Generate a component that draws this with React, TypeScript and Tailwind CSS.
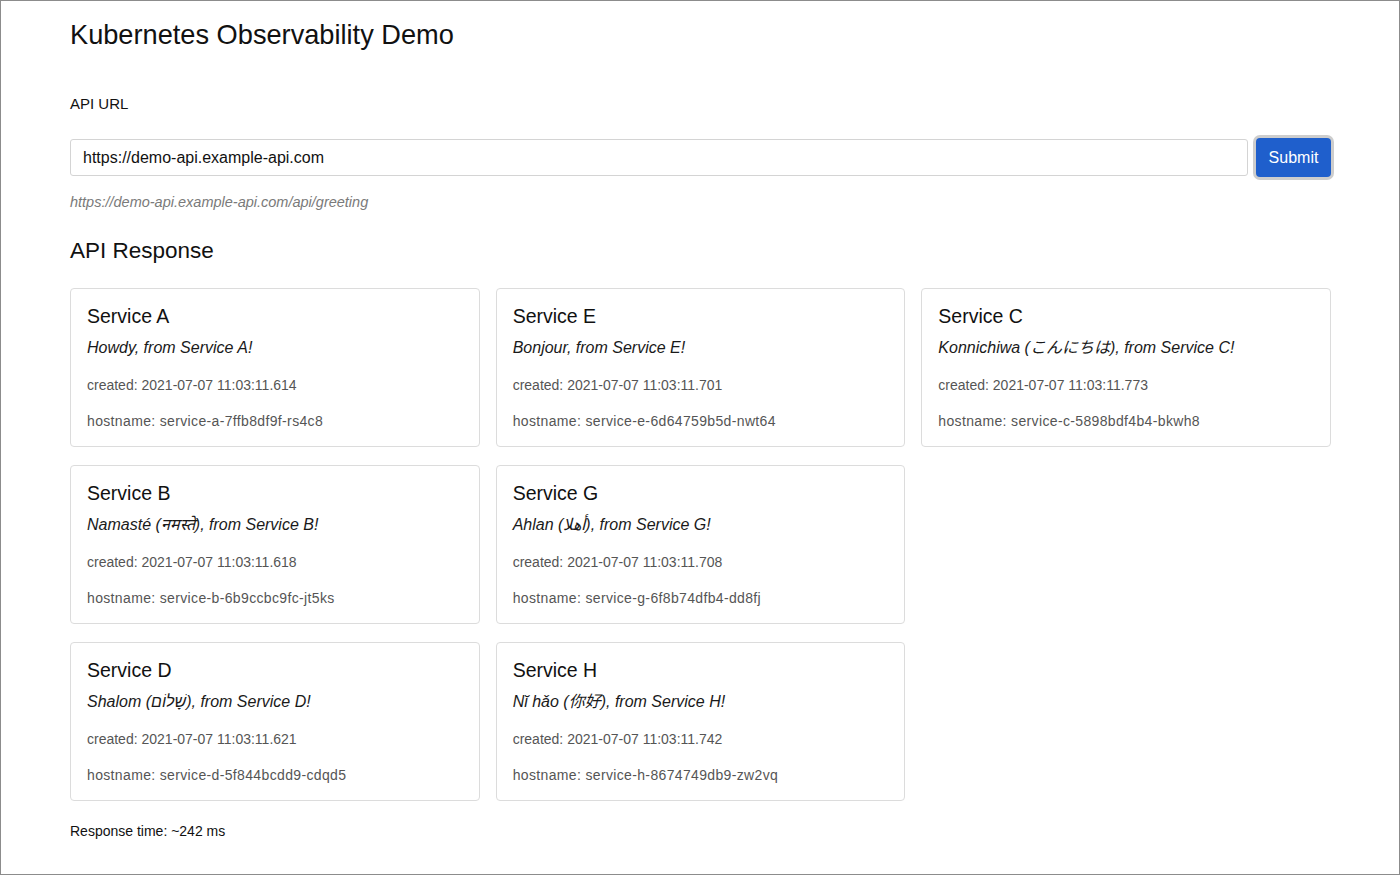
import React from 'react';

interface Service {
  name: string;
  greeting: string;
  created: string;
  hostname: string;
}

const rows: Service[][] = [
  [
    { name: 'Service A', greeting: 'Howdy, from Service A!', created: '2021-07-07 11:03:11.614', hostname: 'service-a-7ffb8df9f-rs4c8' },
    { name: 'Service E', greeting: 'Bonjour, from Service E!', created: '2021-07-07 11:03:11.701', hostname: 'service-e-6d64759b5d-nwt64' },
    { name: 'Service C', greeting: 'Konnichiwa (こんにちは), from Service C!', created: '2021-07-07 11:03:11.773', hostname: 'service-c-5898bdf4b4-bkwh8' },
  ],
  [
    { name: 'Service B', greeting: 'Namasté (नमस्ते), from Service B!', created: '2021-07-07 11:03:11.618', hostname: 'service-b-6b9ccbc9fc-jt5ks' },
    { name: 'Service G', greeting: 'Ahlan (أهلا), from Service G!', created: '2021-07-07 11:03:11.708', hostname: 'service-g-6f8b74dfb4-dd8fj' },
  ],
  [
    { name: 'Service D', greeting: 'Shalom (שָׁלוֹם), from Service D!', created: '2021-07-07 11:03:11.621', hostname: 'service-d-5f844bcdd9-cdqd5' },
    { name: 'Service H', greeting: 'Nĭ hǎo (你好), from Service H!', created: '2021-07-07 11:03:11.742', hostname: 'service-h-8674749db9-zw2vq' },
  ],
];

const ServiceCard = ({ service }: { service: Service }) => (
  <div className="border border-[#dcdcdc] rounded-[4px] px-4 pt-[15px] pb-[15px] bg-white">
    <h5 className="text-[19.5px] leading-[24px] text-[#111]">{service.name}</h5>
    <p className="mt-2 text-[16px] leading-[24px] italic text-[#1a1a1a]">{service.greeting}</p>
    <p className="mt-[15px] text-[14px] leading-[20px] text-[#555]">created: {service.created}</p>
    <p className="mt-4 text-[14px] leading-[20px] tracking-[0.35px] text-[#555]">hostname: {service.hostname}</p>
  </div>
);

export default function App() {
  return (
    <div
      className="w-[1400px] h-[875px] border border-[#8c8c8c] bg-white overflow-hidden"
      style={{ fontFamily: '"Liberation Sans", "DejaVu Sans", "Noto Sans CJK JP", sans-serif' }}
    >
      <div className="ml-[69px] w-[1261px]">
        {/* Header */}
        <h1 className="mt-[19px] text-[27.2px] leading-[30px] text-[#111]">Kubernetes Observability Demo</h1>

        {/* URL form */}
        <label className="block mt-[44px] text-[15px] leading-[20px] text-[#111]">API URL</label>
        <div className="flex items-center gap-2 mt-[24px]">
          <input
            className="flex-1 h-[37px] border border-[#d4d4d4] rounded-[3px] px-3 text-[16px] text-[#111] outline-none"
            defaultValue="https://demo-api.example-api.com"
            readOnly
          />
          <button className="w-[75px] h-[39px] rounded-[4px] bg-[#1f5fcc] text-white text-[16px] ring-[3px] ring-[#cdcdcd]">
            Submit
          </button>
        </div>
        <p className="mt-[16px] text-[14.5px] leading-[18px] italic text-[#7a7a7a]">https://demo-api.example-api.com/api/greeting</p>

        {/* Response */}
        <h2 className="mt-[26px] text-[22.5px] leading-[28px] text-[#111]">API Response</h2>
        <div className="mt-[23px] flex flex-col gap-[18px]">
          {rows.map((row, i) => (
            <div key={i} className="grid grid-cols-3 gap-4">
              {row.map((s) => (
                <ServiceCard key={s.name} service={s} />
              ))}
            </div>
          ))}
        </div>
        <p className="mt-[21px] text-[14px] leading-[18px] text-[#111]">Response time: ~242 ms</p>
      </div>
    </div>
  );
}
